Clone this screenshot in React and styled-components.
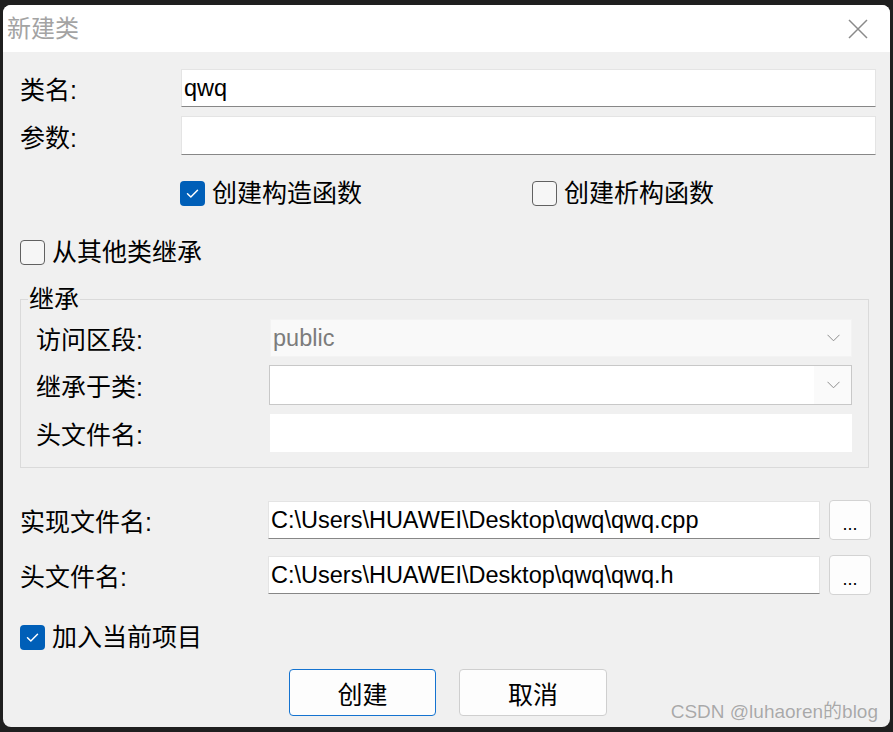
import styled, { createGlobalStyle } from "styled-components";

const GlobalStyle = createGlobalStyle`
  html, body {
    margin: 0;
    padding: 0;
    background: #1f1f1f;
  }
  body {
    font-family: "Liberation Sans", "Noto Sans CJK SC", sans-serif;
    color: #000;
  }
`;

const Screen = styled.div`
  width: 893px;
  height: 732px;
  box-sizing: border-box;
  padding: 5px 3px;
  background: #1f1f1f;
`;

const Window = styled.div`
  position: relative;
  height: 100%;
  border-radius: 8px;
  overflow: hidden;
  background: #f0f0f0;
  display: flex;
  flex-direction: column;
`;

const TitleBar = styled.div`
  height: 47px;
  flex: none;
  background: #fff;
  display: flex;
  align-items: center;
  justify-content: space-between;
  padding: 0 22px 0 4px;
`;

const Title = styled.span`
  font-size: 24px;
  line-height: 24px;
  color: #a3a3a3;
`;

const Body = styled.div`
  display: flex;
  flex-direction: column;
  padding: 17px 14px 0 17px;
`;

const Row = styled.div`
  display: grid;
  grid-template-columns: ${(p) => p.$label}px 1fr ${(p) => (p.$button ? "42px" : "")};
  column-gap: ${(p) => (p.$button ? "9px" : "0")};
  align-items: center;
  margin-top: ${(p) => p.$top || 0}px;
  margin-right: ${(p) => p.$right || 0}px;
`;

const Label = styled.span`
  font-size: 25px;
  line-height: 28px;
  padding-top: 4px;
  white-space: nowrap;
`;

const TextBox = styled.div`
  height: ${(p) => p.$h || 38}px;
  box-sizing: border-box;
  background: #fff;
  border: 1px solid ${(p) => (p.$flat ? "#fff" : "#e4e4e4")};
  border-bottom-color: ${(p) => (p.$flat ? "#fff" : "#878787")};
  padding: 0 0 0 2px;
  font-size: 23.5px;
  display: flex;
  align-items: center;
  white-space: nowrap;
  overflow: hidden;
`;

const Combo = styled.div`
  height: ${(p) => (p.$disabled ? 38 : 40)}px;
  box-sizing: border-box;
  background: ${(p) => (p.$disabled ? "#f9f9f9" : "#fff")};
  border: 1px solid ${(p) => (p.$disabled ? "#f3f3f3" : "#c8c8c8")};
  display: flex;
  align-items: center;
  font-size: 23.5px;
  color: #7c7c7c;
  padding-left: 2px;
`;

const ComboText = styled.span`
  flex: 1;
`;

const DropArea = styled.span`
  width: 35px;
  align-self: stretch;
  display: flex;
  align-items: center;
  justify-content: center;
  background: ${(p) => (p.$shade ? "#fafafa" : "transparent")};
  padding-left: 2px;
`;

const BrowseButton = styled.button`
  height: 40px;
  box-sizing: border-box;
  background: #fdfdfd;
  border: 1px solid #d3d3d3;
  border-radius: 4px;
  font-family: inherit;
  font-size: 18px;
  padding: 8px 0 0;
  color: #000;
`;

const CheckRow = styled.div`
  display: grid;
  grid-template-columns: ${(p) => (p.$split ? "352px auto" : "auto")};
  justify-content: start;
  padding-left: ${(p) => p.$indent || 0}px;
  margin-top: ${(p) => p.$top || 0}px;
`;

const CheckLabel = styled.label`
  display: flex;
  align-items: center;
  gap: 7px;
  font-size: 25px;
  line-height: 28px;
`;

const Box = styled.span`
  width: 25px;
  height: 25px;
  box-sizing: border-box;
  border-radius: 4px;
  display: flex;
  align-items: center;
  justify-content: center;
  background: ${(p) => (p.$checked ? "#005fb8" : "#f6f6f6")};
  border: ${(p) => (p.$checked ? "none" : "1.5px solid #616161")};
`;

const Group = styled.fieldset`
  margin: 21px 7px 0 0;
  border: 1px solid #dadada;
  padding: 8px 16px 15px 15px;
  display: flex;
  flex-direction: column;
  min-width: 0;
`;

const Legend = styled.legend`
  font-size: 25px;
  line-height: 24px;
  padding: 0 1px;
  margin-left: -8px;
`;

const Actions = styled.div`
  display: flex;
  justify-content: center;
  gap: 23px;
  margin-top: 18px;
`;

const ActionButton = styled.button`
  width: ${(p) => (p.$primary ? 147 : 148)}px;
  height: 47px;
  box-sizing: border-box;
  background: #fdfdfd;
  border: 1px solid ${(p) => (p.$primary ? "#1473d0" : "#cfcfcf")};
  border-radius: 4px;
  font-family: inherit;
  font-size: 25px;
  color: #000;
  padding: 0;
`;

const Watermark = styled.span`
  position: absolute;
  right: 12px;
  bottom: 4px;
  font-size: 19px;
  color: #a9a9a9;
  text-shadow: 0 0 1px #fff;
  white-space: nowrap;
`;

function CloseIcon() {
  return (
    <svg width="20" height="20" viewBox="0 0 20 20">
      <path d="M1 1 L19 19 M19 1 L1 19" stroke="#8a8a8a" strokeWidth="1.5" fill="none" />
    </svg>
  );
}

function Chevron() {
  return (
    <svg width="13" height="8" viewBox="0 0 13 8">
      <path d="M0.5 0.8 L6.5 6.8 L12.5 0.8" stroke="#8e8e8e" strokeWidth="1" fill="none" />
    </svg>
  );
}

function Checkbox({ checked, children }) {
  return (
    <CheckLabel>
      <Box $checked={checked}>
        {checked && (
          <svg width="25" height="25" viewBox="0 0 25 25">
            <path d="M7.5 12.8 L10.8 16 L17.5 9.3" stroke="#fff" strokeWidth="1.5" fill="none" strokeLinecap="round" strokeLinejoin="round" />
          </svg>
        )}
      </Box>
      {children}
    </CheckLabel>
  );
}

export default function App() {
  return (
    <Screen>
      <GlobalStyle />
      <Window>
        <TitleBar>
          <Title>新建类</Title>
          <CloseIcon />
        </TitleBar>
        <Body>
          <Row $label={161}>
            <Label>类名:</Label>
            <TextBox>qwq</TextBox>
          </Row>
          <Row $label={161} $top={9}>
            <Label>参数:</Label>
            <TextBox $h={39} />
          </Row>

          <CheckRow $split $indent={160} $top={24}>
            <Checkbox checked>创建构造函数</Checkbox>
            <Checkbox>创建析构函数</Checkbox>
          </CheckRow>

          <CheckRow $top={31}>
            <Checkbox>从其他类继承</Checkbox>
          </CheckRow>

          <Group>
            <Legend>继承</Legend>
            <Row $label={234}>
              <Label>访问区段:</Label>
              <Combo $disabled>
                <ComboText>public</ComboText>
                <DropArea>
                  <Chevron />
                </DropArea>
              </Combo>
            </Row>
            <Row $label={233} $top={8}>
              <Label>继承于类:</Label>
              <Combo>
                <ComboText />
                <DropArea $shade>
                  <Chevron />
                </DropArea>
              </Combo>
            </Row>
            <Row $label={234} $top={9}>
              <Label>头文件名:</Label>
              <TextBox $flat />
            </Row>
          </Group>

          <Row $label={239} $button $right={5} $top={32}>
            <Label>实现文件名:</Label>
            <TextBox>C:\Users\HUAWEI\Desktop\qwq\qwq.cpp</TextBox>
            <BrowseButton>...</BrowseButton>
          </Row>
          <Row $label={239} $button $right={5} $top={15}>
            <Label>头文件名:</Label>
            <TextBox>C:\Users\HUAWEI\Desktop\qwq\qwq.h</TextBox>
            <BrowseButton>...</BrowseButton>
          </Row>

          <CheckRow $top={28}>
            <Checkbox checked>加入当前项目</Checkbox>
          </CheckRow>

          <Actions>
            <ActionButton $primary>创建</ActionButton>
            <ActionButton>取消</ActionButton>
          </Actions>
        </Body>
        <Watermark>CSDN @luhaoren的blog</Watermark>
      </Window>
    </Screen>
  );
}
